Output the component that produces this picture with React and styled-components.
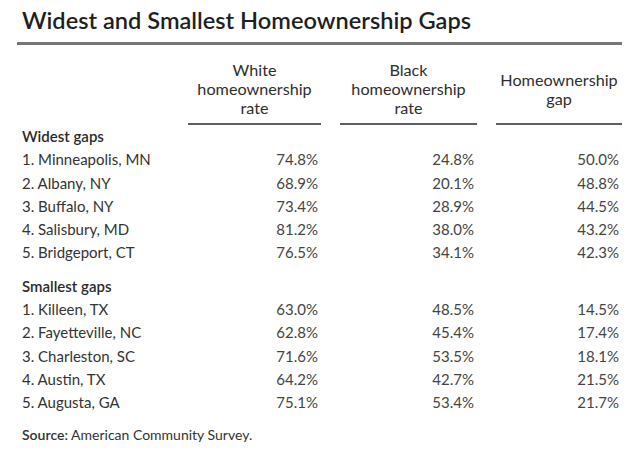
import { createGlobalStyle, styled } from "styled-components";

const GlobalStyle = createGlobalStyle`
  body {
    margin: 0;
    background: #ffffff;
    font-family: Lato, "Open Sans", "Liberation Sans", sans-serif;
  }
`;

const Page = styled.div`
  width: 605px;
  padding: 0 0 0 17px;
  color: #333;
`;

const Title = styled.h1`
  margin: 0;
  padding: 7px 0 0 5px;
  font-size: 23.6px;
  font-weight: 600;
  line-height: 27px;
  color: #1f1f1f;
`;

const Rule = styled.div`
  height: 3px;
  margin-top: 8px;
  background: #767676;
`;

const Table = styled.div`
  display: grid;
  grid-template-columns: 147px 133px 137px 126px;
  column-gap: 19px;
  padding-left: 5px;
  margin-top: 15px;
`;

const HeadCell = styled.div`
  grid-column: ${(p) => p.$col};
  display: flex;
  align-items: center;
  justify-content: center;
  text-align: center;
  font-size: 16.2px;
  line-height: 19px;
  color: #2e2e2e;
  padding-bottom: 6px;
  border-bottom: ${(p) => (p.$line ? "2px solid #5e5e5e" : "none")};
`;

const Section = styled.div`
  grid-column: 1 / -1;
  height: 23.3px;
  line-height: 23.3px;
  font-size: 15px;
  font-weight: 600;
  color: #2a2a2a;
  margin-top: ${(p) => p.$gap || 0}px;
`;

const Label = styled.div`
  height: 23.3px;
  line-height: 23.3px;
  font-size: 15px;
  color: #333;
  white-space: nowrap;
`;

const Num = styled.div`
  height: 23.3px;
  line-height: 23.3px;
  font-size: 15px;
  color: #444;
  text-align: right;
  padding-right: 3px;
`;

const Source = styled.p`
  margin: 11px 0 0 5px;
  font-size: 14px;
  color: #333;

  strong {
    font-weight: 600;
  }
`;

const widest = [
  ["1. Minneapolis, MN", "74.8%", "24.8%", "50.0%"],
  ["2. Albany, NY", "68.9%", "20.1%", "48.8%"],
  ["3. Buffalo, NY", "73.4%", "28.9%", "44.5%"],
  ["4. Salisbury, MD", "81.2%", "38.0%", "43.2%"],
  ["5. Bridgeport, CT", "76.5%", "34.1%", "42.3%"],
];

const smallest = [
  ["1. Killeen, TX", "63.0%", "48.5%", "14.5%"],
  ["2. Fayetteville, NC", "62.8%", "45.4%", "17.4%"],
  ["3. Charleston, SC", "71.6%", "53.5%", "18.1%"],
  ["4. Austin, TX", "64.2%", "42.7%", "21.5%"],
  ["5. Augusta, GA", "75.1%", "53.4%", "21.7%"],
];

const Rows = ({ rows }) =>
  rows.map((r) => [
    <Label key={r[0]}>{r[0]}</Label>,
    <Num key={r[0] + "w"}>{r[1]}</Num>,
    <Num key={r[0] + "b"}>{r[2]}</Num>,
    <Num key={r[0] + "g"}>{r[3]}</Num>,
  ]);

export default function App() {
  return (
    <Page>
      <GlobalStyle />
      <Title>Widest and Smallest Homeownership Gaps</Title>
      <Rule />
      <Table>
        <HeadCell $col={1} />
        <HeadCell $col={2} $line>
          White
          <br />
          homeownership
          <br />
          rate
        </HeadCell>
        <HeadCell $col={3} $line>
          Black
          <br />
          homeownership
          <br />
          rate
        </HeadCell>
        <HeadCell $col={4} $line>
          Homeownership
          <br />
          gap
        </HeadCell>
        <Section>Widest gaps</Section>
        <Rows rows={widest} />
        <Section $gap={10}>Smallest gaps</Section>
        <Rows rows={smallest} />
      </Table>
      <Source>
        <strong>Source:</strong> American Community Survey.
      </Source>
    </Page>
  );
}
